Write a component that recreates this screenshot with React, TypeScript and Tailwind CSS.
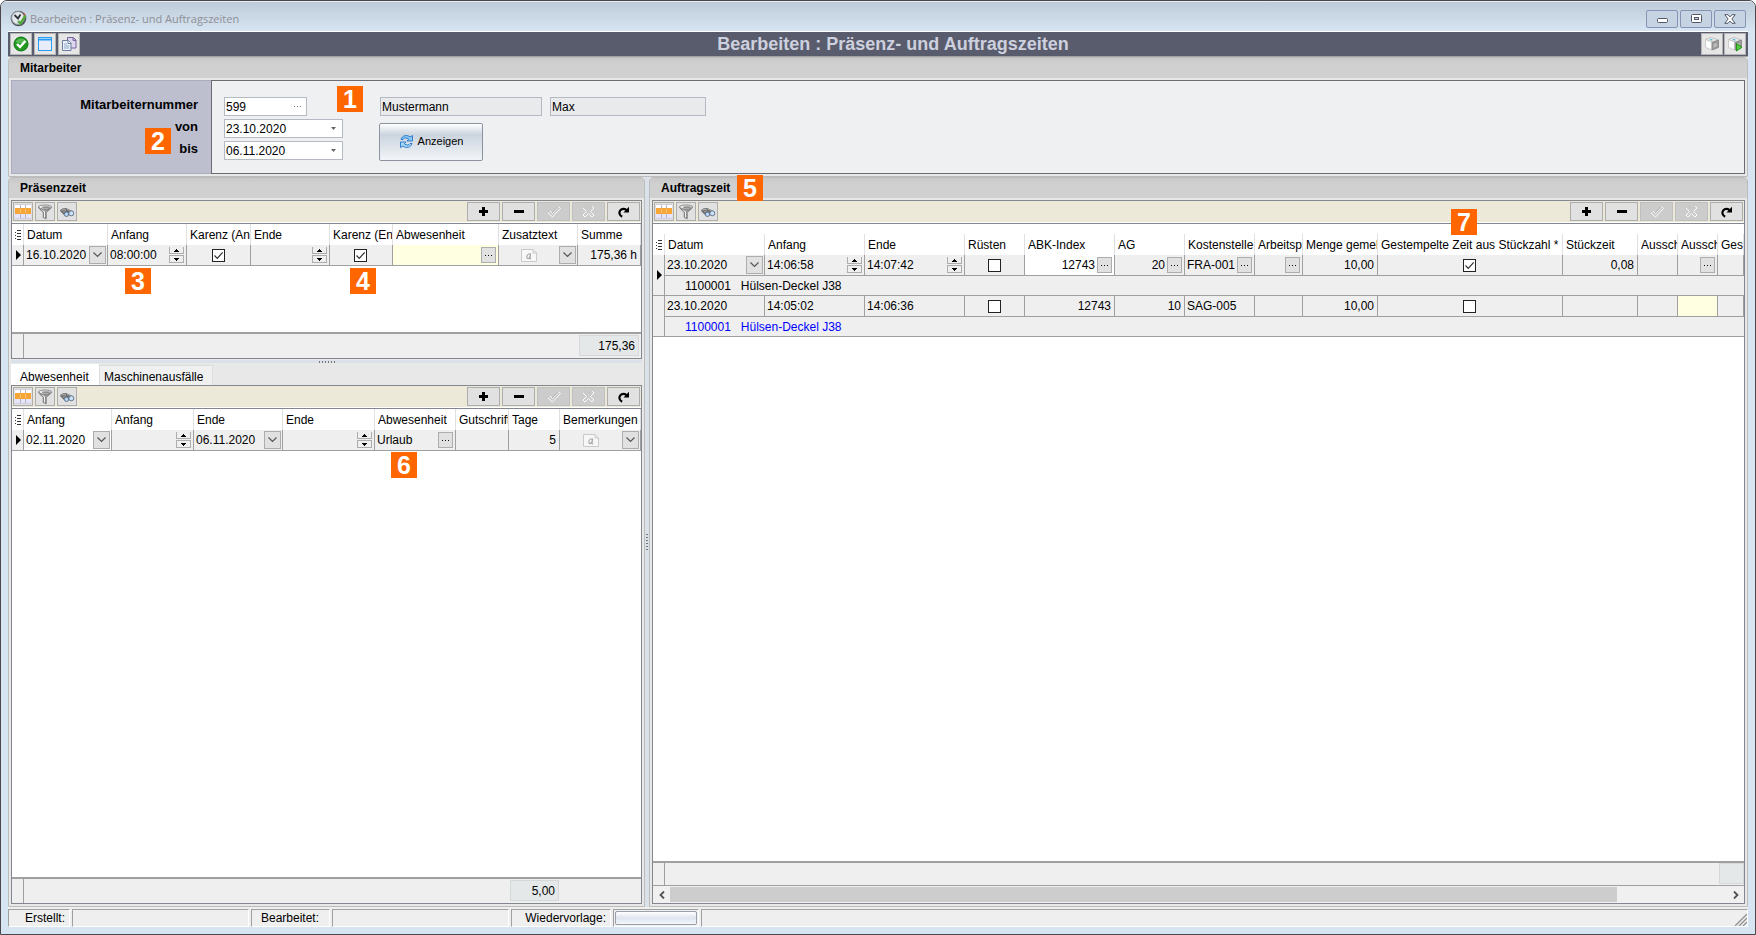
import React, { useId } from "react";

/* ---------- icons ---------- */

const ClockIcon = () => (
  <svg width="17" height="17" viewBox="0 0 17 17" className="shrink-0">
    <circle cx="8.5" cy="8.5" r="7.8" fill="#4f545c" />
    <circle cx="8" cy="8" r="6.4" fill="#e4e9ed" stroke="#8e959c" />
    <path d="M4.5 5l3.5 3.500L10.500 4.500" fill="none" stroke="#2f343b" strokeWidth="1.8" />
    <path d="M8 11l2.500 2.500 5-8" fill="none" stroke="#55a83c" strokeWidth="2.4" />
    <path d="M13.500 3.500l1.500 1.500" stroke="#c8443c" strokeWidth="1.2" />
  </svg>
);

const OkIcon = () => (
  <svg width="16" height="16" viewBox="0 0 16 16">
    <circle cx="8" cy="8" r="7" fill="#1f9a1f" stroke="#0f7415" />
    <path d="M2.5 6a6 6 0 0 1 11 0c-2 1.6-8 2-11 0z" fill="#6cc86a" opacity=".7" />
    <path d="M4 8l3 3 5.4-6" fill="none" stroke="#fff" strokeWidth="2.4" />
  </svg>
);

const WindowIcon = () => (
  <svg width="16" height="16" viewBox="0 0 16 16">
    <rect x="1.5" y="1.5" width="13" height="13" fill="#e9ecfb" stroke="#2a9bf2" />
    <rect x="1" y="1" width="14" height="3.5" fill="#2a9bf2" />
    <rect x="2" y="2" width="12" height="1" fill="#9bd6ff" />
  </svg>
);

const CopyIcon = () => (
  <svg width="16" height="16" viewBox="0 0 16 16">
    <path d="M6.500 1.500h6l2.500 2.500v8h-8.500z" fill="#dcd6ee" stroke="#77629c" />
    <path d="M12 1.500v3h3" fill="#b9a9dc" stroke="#77629c" />
    <path d="M1.500 4.500h6l2.500 2.500v7.500h-8.500z" fill="#eef3fb" stroke="#6b7d9c" />
    <path d="M7 4.500v3h3" fill="#fff" stroke="#6b7d9c" />
    <path d="M3 8h3M3 10h5.500M3 12h5.500" stroke="#8ea4c8" />
  </svg>
);

const CubeIcon = ({ play = false }: { play?: boolean }) => (
  <svg width="16" height="16" viewBox="0 0 16 16">
    <path d="M1.500 3.500l5.500-2 7.500 2.500-6 2z" fill="#ececec" stroke="#b9b9b9" strokeWidth=".8" />
    <path d="M1.500 3.500l6.500 2.500v8l-6.500-2.500z" fill="#fdfdfd" stroke="#c2c2c2" strokeWidth=".8" />
    <path d="M8 6.500l6.500-2.500v7.500l-6.500 2.500z" fill="#999" stroke="#858585" strokeWidth=".8" />
    <path d="M9.500 8l3.500-1.300v3.600l-3.500 1.400z" fill="#b9b9b9" />
    <path d="M6 3.200l2.500 1" stroke="#3db4dd" strokeWidth="1.2" />
    {play && <path d="M9.500 7.500l5.500 3.800-5.500 3.700z" fill="#4fd13a" stroke="#2a8f1e" />}
  </svg>
);

const GridIcon = () => (
  <svg width="16" height="15" viewBox="0 0 16 15" shapeRendering="crispEdges" className="shrink-0">
    <rect width="16" height="15" fill="#ffffff" />
    <rect y="10" width="16" height="5" fill="#e4e4fa" />
    <path d="M5 0h1v15h-1zM10 0h1v15h-1z" fill="#b9b4c4" />
    <rect y="4" width="16" height="6" fill="#f7a534" />
    <path d="M5 5h1v4h-1zM10 5h1v4h-1z" fill="#fac67e" />
    <path d="M0 0h16v1h-16zM0 14h16v1h-16z" fill="#d0d0dc" />
  </svg>
);

const FunnelIcon = () => (
  <svg width="16" height="16" viewBox="0 0 16 16" className="shrink-0">
    <path d="M1.500 3c0 2 4.700 4.500 4.700 5.500v5l3 1.200v-6.200c0-1 5.300-3.500 5.300-5.500z" fill="#979797" stroke="#6d6d6d" strokeWidth=".8" />
    <path d="M3.500 5c1.500 1.500 3.500 2.500 3.500 3.500v4.800l1 .4V7.500c-1-.7-3-1.500-4.500-2.500z" fill="#f0f0f0" />
    <ellipse cx="8" cy="3" rx="6.500" ry="2" fill="#ececec" stroke="#777" strokeWidth=".8" />
    <ellipse cx="9" cy="3.300" rx="4" ry="1" fill="#8f8f8f" />
  </svg>
);

const BinocularsIcon = () => (
  <svg width="16" height="16" viewBox="0 0 16 16" className="shrink-0">
    <path d="M1 7c0-2 3.500-3.500 6-3l5.500 2.500 1.500 2-6 3.500-3.500-1.500z" fill="#6f6f6f" />
    <path d="M2.500 6.300c1.500-1 2.500-1.200 4-1" stroke="#c9c9c9" fill="none" />
    <path d="M8 5.300l4 1.700M4 8l3-1.500" stroke="#a5a5a5" />
    <circle cx="7.500" cy="10.300" r="2.200" fill="#b5d6f8" stroke="#5c6b80" strokeWidth=".9" />
    <circle cx="12.300" cy="9.300" r="2.500" fill="#c9e2fa" stroke="#5c6b80" strokeWidth=".9" />
  </svg>
);

const PlusIcon = () => (
  <svg width="9" height="9" viewBox="0 0 9 9" shapeRendering="crispEdges">
    <path d="M3 0h3v3h3v3h-3v3h-3v-3h-3v-3h3z" fill="#000" />
  </svg>
);

const MinusIcon = () => (
  <svg width="10" height="9" viewBox="0 0 10 9" shapeRendering="crispEdges">
    <path d="M0 3h10v3h-10z" fill="#000" />
  </svg>
);

const PostIcon = () => (
  <svg width="14" height="12" viewBox="0 0 14 12">
    <path d="M1 7l2-2 2.500 2.500 6-7 2 2L5.500 11z" fill="#cbcbcb" stroke="#fff" strokeWidth=".9" />
    <path d="M1 6.500l1.500-1.500M5 7l6-6.500" stroke="#a3a3a3" strokeWidth=".8" />
  </svg>
);

const CancelIcon = () => (
  <svg width="13" height="13" viewBox="0 0 13 13">
    <path d="M1 3l2-2 3.500 3.500L10 1l2 2-3.500 3.500L12 10l-2 2-3.500-3.500L3 12l-2-2 3.500-3.500z" fill="#cbcbcb" stroke="#fff" strokeWidth=".9" />
    <path d="M1 2.800l2-2 3.500 3.500L10 .8" fill="none" stroke="#a3a3a3" strokeWidth=".7" />
  </svg>
);

const ReloadIcon = () => (
  <svg width="12" height="12" viewBox="0 0 12 12">
    <path d="M4.200 10.600A4 4 0 1 1 8.800 4.600" fill="none" stroke="#000" strokeWidth="2.200" />
    <path d="M11 .8v5.700H5.500z" fill="#000" />
  </svg>
);

const RefreshIcon = () => (
  <svg width="15" height="15" viewBox="0 0 15 15">
    <path d="M2 5.500C3 1.500 8 .3 11 3l2.500-1.500v5.500H8l1.700-1.800C7.500 3.300 4.800 3.800 4 5.500z" fill="#8cc8f4" stroke="#2272c8" strokeWidth=".9" />
    <path d="M13 9.500c-1 4-6 5.200-9 2.500l-2.500 1.500V8H7L5.300 9.800c2.200 1.900 4.900 1.400 5.700-.3z" fill="#a8d8f8" stroke="#2272c8" strokeWidth=".9" />
  </svg>
);

const IndicatorIcon = () => (
  <svg width="6" height="10" viewBox="0 0 6 10" shapeRendering="crispEdges" className="ml-[3px]">
    <path d="M2 .5h4M2 3.500h4M2 6.500h4M2 9.500h4M0 2h1M0 5h1M0 8h1" stroke="#333" />
  </svg>
);

const RowArrow = () => (
  <svg width="5" height="10" viewBox="0 0 5 10" className="ml-1">
    <path d="M0 0l5 5-5 5z" fill="#000" />
  </svg>
);

const NoteIcon = () => (
  <svg width="16" height="13" viewBox="0 0 16 13">
    <path d="M.5.500h11.500l3.500 3.500v8.500h-15z" fill="#f7f7f7" stroke="#c9c9c9" />
    <path d="M12 .5v3.500h3.500" fill="none" stroke="#c9c9c9" />
    <path d="M9.700 4.500L9 9.200c0 .8.600.8 1 .3M9.400 6.200c-.3-2-2.600-1.500-3.300.4-.8 2.400.4 3.600 1.500 2.900.8-.5 1.500-1.800 1.800-3.300z" fill="none" stroke="#a5a5a5" strokeWidth="1.100" />
  </svg>
);

/* ---------- small controls ---------- */

const Badge = ({ n, className }: { n: number; className: string }) => (
  <span
    className={`absolute z-10 flex size-[26px] items-center justify-center bg-[#ff6600] text-[25px] leading-none font-bold text-white ${className}`}
  >
    {n}
  </span>
);

const ComboButton = ({ label }: { label: string }) => (
  <button type="button" aria-label={label} className="flex h-[18px] w-[17px] shrink-0 items-center justify-center border border-[#adadad] bg-[#e1e1e1]">
    <svg width="9" height="6" viewBox="0 0 9 6">
      <path d="M.5.500l4 4 4-4" fill="none" stroke="#555" strokeWidth="1.200" />
    </svg>
  </button>
);

const DotsButton = ({ label }: { label: string }) => (
  <button type="button" aria-label={label} className="flex h-4 w-[15px] shrink-0 items-center justify-center border border-[#adadad] bg-[#e1e1e1]">
    <svg width="7" height="1" viewBox="0 0 7 1" shapeRendering="crispEdges">
      <path d="M0 0h1v1h-1zM3 0h1v1h-1zM6 0h1v1h-1z" fill="#111" />
    </svg>
  </button>
);

const Spinner = ({ label }: { label: string }) => (
  <span className="flex shrink-0 flex-col gap-px">
    <button type="button" aria-label={`${label} erhöhen`} className="flex h-[7px] w-[15px] items-center justify-center border border-t-0 border-[#adadad] bg-[#efefef]">
      <svg width="5" height="3" viewBox="0 0 5 3" shapeRendering="crispEdges">
        <path d="M2 0h1v1h1v1h1v1h-5v-1h1v-1h1z" fill="#000" />
      </svg>
    </button>
    <button type="button" aria-label={`${label} verringern`} className="flex h-2 w-[15px] items-center justify-center border border-[#adadad] bg-[#efefef]">
      <svg width="5" height="3" viewBox="0 0 5 3" shapeRendering="crispEdges">
        <path d="M0 0h5v1h-1v1h-1v1h-1v-1h-1v-1h-1z" fill="#000" />
      </svg>
    </button>
  </span>
);

const Check = ({ label, on = false }: { label: string; on?: boolean }) => (
  <div className="flex justify-center pr-px">
    <span className="relative block size-[13px]">
      <input type="checkbox" aria-label={label} defaultChecked={on} className="peer block size-[13px] appearance-none border border-[#222] bg-white" />
      <svg width="13" height="13" viewBox="0 0 13 13" className="pointer-events-none invisible absolute inset-0 peer-checked:visible">
        <path d="M2.500 6.500l2.800 2.800 5.400-6" fill="none" stroke="#333" strokeWidth="1.200" />
      </svg>
    </span>
  </div>
);

const TextCell = ({ label, value, right = false }: { label: string; value: string; right?: boolean }) => (
  <input
    type="text"
    aria-label={label}
    defaultValue={value}
    className={`h-[18px] w-full min-w-0 flex-1 bg-transparent outline-none ${right ? "text-right" : "text-left"}`}
  />
);

/* ---------- tables ---------- */

type CellSpec = {
  value?: string;
  right?: boolean;
  kind?: "combo" | "dots" | "spin" | "check" | "note";
  on?: boolean;
  bg?: string;
};

const Cell = ({ cell, label }: { cell: CellSpec; label: string }) => {
  const k = cell.kind;
  const pad = k === "combo" ? "pl-0.5 pr-px" : k === "spin" || k === "dots" ? "pl-0.5 pr-0.5" : "pl-0.5 pr-[3px]";
  return (
    <td className={`h-[21px] border-r border-b border-[#a0a0a0] p-0 ${cell.bg ?? "bg-[#efefef]"}`}>
      {k === "check" ? (
        <Check label={label} on={cell.on} />
      ) : k === "note" ? (
        <div className="flex items-center pr-px">
          <span className="flex flex-1 justify-center">
            <NoteIcon />
          </span>
          <ComboButton label={label} />
        </div>
      ) : (
        <div className={`flex items-center gap-0.5 ${pad}`}>
          <TextCell label={label} value={cell.value ?? ""} right={cell.right} />
          {k === "combo" && <ComboButton label={`${label} auswählen`} />}
          {k === "dots" && <DotsButton label={`${label} suchen`} />}
          {k === "spin" && <Spinner label={label} />}
        </div>
      )}
    </td>
  );
};

const Head = ({ columns }: { columns: string[] }) => (
  <thead>
    <tr>
      <th className="h-[21px] border-r border-[#e0e0e0] p-0">
        <IndicatorIcon />
      </th>
      {columns.map((c, i) => (
        <th key={i} className="h-[21px] border-r border-[#e0e0e0] p-0 pl-[3px] text-left font-normal">
          <div className="overflow-hidden whitespace-nowrap">{c}</div>
        </th>
      ))}
    </tr>
  </thead>
);

const Cols = ({ widths }: { widths: string[] }) => (
  <colgroup>
    <col className="w-3" />
    {widths.map((w, i) => (
      <col key={i} className={w} />
    ))}
  </colgroup>
);

const Marker = ({ rows = 1, active = false }: { rows?: number; active?: boolean }) => (
  <td rowSpan={rows} className="border-r border-b border-[#a0a0a0] bg-[#efefef] p-0">
    {active && <RowArrow />}
  </td>
);

const toolButton = "flex h-[19px] w-5 items-center justify-center border border-[#adadad] bg-[#e1e1e1]";
const navButton = "flex h-[19px] w-[33px] items-center justify-center border";
const navActive = "border-[#adadad] bg-[#e1e1e1]";
const navIdle = "border-[#bfbfbf] bg-[#cccccc]";

const GridToolbar = () => (
  <div className="flex h-[22px] shrink-0 items-center justify-between border-b border-white bg-[#ece9d8] px-px">
    <div className="flex gap-0.5">
      <button type="button" aria-label="Spalten" className={toolButton}><GridIcon /></button>
      <button type="button" aria-label="Filter" className={toolButton}><FunnelIcon /></button>
      <button type="button" aria-label="Suchen" className={toolButton}><BinocularsIcon /></button>
    </div>
    <div className="flex gap-0.5">
      <button type="button" aria-label="Einfügen" className={`${navButton} ${navActive}`}><PlusIcon /></button>
      <button type="button" aria-label="Löschen" className={`${navButton} ${navActive}`}><MinusIcon /></button>
      <button type="button" aria-label="Speichern" disabled className={`${navButton} ${navIdle}`}><PostIcon /></button>
      <button type="button" aria-label="Abbrechen" disabled className={`${navButton} ${navIdle}`}><CancelIcon /></button>
      <button type="button" aria-label="Aktualisieren" className={`${navButton} ${navActive}`}><ReloadIcon /></button>
    </div>
  </div>
);

const SectionHead = ({ children }: { children: React.ReactNode }) => (
  <h2 className="h-5 shrink-0 bg-linear-to-b from-[#c8c8c8] to-[#d0d0d0] to-30% pl-[11px] text-xs leading-5 font-bold">{children}</h2>
);

const presence = {
  columns: ["Datum", "Anfang", "Karenz (Anfang)", "Ende", "Karenz (Ende)", "Abwesenheit", "Zusatztext", "Summe"],
  widths: ["w-[84px]", "w-[79px]", "w-[64px]", "w-[79px]", "w-[63px]", "w-[106px]", "w-[79px]", "w-auto"],
  cells: [
    { value: "16.10.2020", kind: "combo" },
    { value: "08:00:00", kind: "spin" },
    { kind: "check", on: true },
    { kind: "spin" },
    { kind: "check", on: true },
    { kind: "dots", bg: "bg-[#ffffe1]" },
    { kind: "note" },
    { value: "175,36 h", right: true },
  ] as CellSpec[],
};

const absence = {
  columns: ["Anfang", "Anfang", "Ende", "Ende", "Abwesenheit", "Gutschrift", "Tage", "Bemerkungen"],
  widths: ["w-[88px]", "w-[82px]", "w-[89px]", "w-[92px]", "w-[81px]", "w-[53px]", "w-[51px]", "w-auto"],
  cells: [
    { value: "02.11.2020", kind: "combo", bg: "bg-white" },
    { kind: "spin" },
    { value: "06.11.2020", kind: "combo" },
    { kind: "spin" },
    { value: "Urlaub", kind: "dots" },
    {},
    { value: "5", right: true },
    { kind: "note" },
  ] as CellSpec[],
};

const orders = {
  columns: ["Datum", "Anfang", "Ende", "Rüsten", "ABK-Index", "AG", "Kostenstelle", "Arbeitsplatz", "Menge gemeldet", "Gestempelte Zeit aus Stückzahl *", "Stückzeit", "Ausschuss", "Ausschuss", "Gesamt"],
  widths: ["w-[100px]", "w-[100px]", "w-[100px]", "w-[60px]", "w-[90px]", "w-[70px]", "w-[70px]", "w-[48px]", "w-[75px]", "w-[185px]", "w-[75px]", "w-[40px]", "w-[40px]", "w-auto"],
  rows: [
    {
      active: true,
      tone: "text-black",
      cells: [
        { value: "23.10.2020", kind: "combo" },
        { value: "14:06:58", kind: "spin" },
        { value: "14:07:42", kind: "spin" },
        { kind: "check" },
        { value: "12743", right: true, kind: "dots", bg: "bg-white" },
        { value: "20", right: true, kind: "dots" },
        { value: "FRA-001", kind: "dots" },
        { kind: "dots" },
        { value: "10,00", right: true },
        { kind: "check", on: true },
        { value: "0,08", right: true },
        {},
        { kind: "dots" },
        {},
      ] as CellSpec[],
    },
    {
      active: false,
      tone: "text-[#0000ff]",
      cells: [
        { value: "23.10.2020" },
        { value: "14:05:02" },
        { value: "14:06:36" },
        { kind: "check" },
        { value: "12743", right: true },
        { value: "10", right: true },
        { value: "SAG-005" },
        {},
        { value: "10,00", right: true },
        { kind: "check" },
        {},
        {},
        { bg: "bg-[#ffffe1]" },
        {},
      ] as CellSpec[],
    },
  ],
};

const tableClass = "w-full table-fixed border-separate border-spacing-0";
const gridFrame = "flex flex-col border border-[#828790] bg-white";

const SimpleTable = ({ data }: { data: typeof presence }) => (
  <table className={tableClass}>
    <Cols widths={data.widths} />
    <Head columns={data.columns} />
    <tbody>
      <tr>
        <Marker active />
        {data.cells.map((c, i) => (
          <Cell key={i} cell={c} label={data.columns[i]} />
        ))}
      </tr>
    </tbody>
  </table>
);

const sumBox = "flex h-[21px] items-center justify-end border border-[#d5d8d8] bg-[#e4e8e9] pr-[3px]";

/* ---------- form ---------- */

const DateField = ({ id, value }: { id: string; value: string }) => (
  <div className="flex h-[19px] w-[119px] items-center border border-[#b4b9c4] bg-white pr-1.5 pl-px">
    <input id={id} type="text" defaultValue={value} className="w-full min-w-0 flex-1 outline-none" />
    <button type="button" aria-label="Kalender öffnen">
      <svg width="5" height="3" viewBox="0 0 5 3" className="block"><path d="M0 0h5l-2.500 3z" fill="#666" /></svg>
    </button>
  </div>
);

const winButton = "flex h-[18px] w-8 items-center justify-center rounded-xs border border-[#8593b5] bg-[#c5d3e3]";
const barButton = "flex size-[22px] items-center justify-center border border-[#b5b5b5] bg-[#e6e6e6]";
const statusCell = "h-[18px] border border-t-[#a0a0a0] border-l-[#a0a0a0] border-r-white border-b-white";

export default function App() {
  const uid = useId();
  const nr = `${uid}-nr`;
  const from = `${uid}-von`;
  const to = `${uid}-bis`;
  return (
    <div className="bg-white">
      <div className="relative flex h-screen flex-col overflow-hidden rounded-t-[7px] border border-[#4b474c] bg-[#d7e4f2] font-['Liberation_Sans',sans-serif] text-xs text-black">
        {/* window title */}
        <header className="flex h-[30px] shrink-0 items-center border-t border-[#e6edf4] bg-linear-to-b from-[#becbd9] to-[#d7e4f2] px-[9px] pt-1">
          <ClockIcon />
          <span className="flex-1 pt-0.5 pl-[3px] font-['Open_Sans',sans-serif] text-[11px] text-[#8e8f94]">Bearbeiten : Präsenz- und Auftragszeiten</span>
          <div className="flex gap-0.5">
            <button type="button" aria-label="Minimieren" className={winButton}>
              <svg width="11" height="5" viewBox="0 0 11 5" className="mt-1"><rect x=".5" y=".5" width="10" height="4" rx="1" fill="#fff" stroke="#535666" /></svg>
            </button>
            <button type="button" aria-label="Maximieren" className={winButton}>
              <svg width="11" height="9" viewBox="0 0 11 9"><rect x=".5" y=".5" width="10" height="8" rx="1" fill="#fff" stroke="#535666" /><rect x="3.500" y="3.500" width="4" height="2" fill="#c5d3e3" stroke="#535666" /></svg>
            </button>
            <button type="button" aria-label="Schließen" className={winButton}>
              <svg width="12" height="10" viewBox="0 0 12 10"><path d="M.8.700h3.200l2 2.200 2-2.200h3.200l-3.400 4.300 3.400 4.300h-3.200l-2-2.200-2 2.200h-3.200l3.400-4.300z" fill="#fff" stroke="#535666" /></svg>
            </button>
          </div>
        </header>

        <div className="mx-[7px] mb-[7px] flex min-h-0 flex-1 flex-col bg-[#e8e8e8]">
          {/* main toolbar */}
          <div className="flex h-[26px] shrink-0 items-center border-t border-b border-t-white border-b-[#a2a2a2] bg-[#595c6c] px-0.5">
            <div className="flex w-[110px] gap-0.5">
              <button type="button" aria-label="OK" className={barButton}><OkIcon /></button>
              <button type="button" aria-label="Fenster" className={barButton}><WindowIcon /></button>
              <button type="button" aria-label="Kopieren" className={barButton}><CopyIcon /></button>
            </div>
            <h1 className="flex-1 text-center text-lg leading-6 font-bold text-[#cdd0de]">Bearbeiten : Präsenz- und Auftragszeiten</h1>
            <div className="flex w-20 justify-end gap-px">
              <button type="button" aria-label="Modul" className={barButton}><CubeIcon /></button>
              <button type="button" aria-label="Modul starten" className={barButton}><CubeIcon play /></button>
            </div>
          </div>

          {/* employee */}
          <section className="flex shrink-0 flex-col rounded-t-sm border border-[#bcbcbc]">
            <SectionHead>Mitarbeiter</SectionHead>
            <div className="m-0.5 flex h-[94px]">
              <div className="flex w-[200px] flex-col gap-[3px] border border-r-0 border-[#a9abc0] bg-[#bdbfcf] pt-3.5 pr-[13px] text-right text-[13px] leading-[19px] font-bold">
                <label htmlFor={nr}>Mitarbeiternummer</label>
                <label htmlFor={from}>von</label>
                <label htmlFor={to}>bis</label>
              </div>
              <div className="flex flex-1 border border-[#6b6c74] bg-[#eff0f2] pt-4 pl-3">
                <div className="flex w-[155px] flex-col gap-[3px]">
                  <div className="flex h-[19px] w-[83px] items-center border border-[#b4b9c4] bg-white pr-1 pl-px">
                    <input id={nr} type="text" defaultValue="599" className="w-full min-w-0 flex-1 outline-none" />
                    <button type="button" aria-label="Mitarbeiter suchen">
                      <svg width="8" height="1" viewBox="0 0 8 1" className="block"><path d="M0 0h1v1h-1zM3 0h1v1h-1zM6 0h1v1h-1z" fill="#777" /></svg>
                    </button>
                  </div>
                  <DateField id={from} value="23.10.2020" />
                  <DateField id={to} value="06.11.2020" />
                </div>
                <div className="flex flex-col gap-[7px]">
                  <div className="flex gap-2 pl-px">
                    <input type="text" readOnly aria-label="Nachname" value="Mustermann" className="h-[19px] w-[162px] border border-[#b4b9c4] bg-[#e9eaec] pl-px" />
                    <input type="text" readOnly aria-label="Vorname" value="Max" className="h-[19px] w-[156px] border border-[#b4b9c4] bg-[#e9eaec] pl-px" />
                  </div>
                  <button type="button" className="flex h-[38px] w-[104px] items-center justify-center gap-1 rounded-xs border border-[#8d949f] bg-linear-to-b from-white via-[#cbd4de] via-30% to-[#f2f5f8] pb-0.5 text-[11px]">
                    <RefreshIcon />
                    Anzeigen
                  </button>
                </div>
              </div>
            </div>
          </section>

          {/* working area */}
          <div className="flex min-h-0 flex-1">
            <div className="flex w-[637px] shrink-0 flex-col rounded-t-sm border border-[#bcbcbc]">
              <SectionHead>Präsenzzeit</SectionHead>
              <div className="m-0.5 flex min-h-0 flex-1 flex-col">
                <section className={`${gridFrame} h-[159px] shrink-0`}>
                  <GridToolbar />
                  <div className="min-h-0 flex-1 overflow-hidden border-t border-[#828790]">
                    <SimpleTable data={presence} />
                  </div>
                  <div className="flex h-[26px] shrink-0 border-t-2 border-[#a0a0a0] bg-[#efefef]">
                    <span className="w-3 border-r border-[#a0a0a0]" />
                    <span className="flex flex-1 items-start justify-end pt-px pr-0.5">
                      <output className={`${sumBox} w-[60px]`}>175,36</output>
                    </span>
                  </div>
                </section>

                <div className="flex h-[5px] shrink-0 justify-center py-px">
                  <div className="flex w-full items-center justify-center gap-0.5 bg-[#dbe1e8]">
                    {[0, 1, 2, 3, 4, 5].map((i) => (
                      <span key={i} className="h-0.5 w-px bg-[#777]" />
                    ))}
                  </div>
                </div>

                <div role="tablist" className="flex h-[21px] shrink-0 items-end">
                  <button type="button" role="tab" aria-selected="true" className="h-[21px] w-[88px] bg-white pt-1 pl-[9px] text-left">Abwesenheit</button>
                  <button type="button" role="tab" aria-selected="false" className="h-5 w-[114px] border border-b-0 border-[#dcdcdc] bg-[#f0f0f0] pt-0.5 pl-1 text-left">Maschinenausfälle</button>
                </div>

                <section className={`${gridFrame} min-h-0 flex-1`}>
                  <GridToolbar />
                  <div className="min-h-0 flex-1 overflow-hidden border-t border-[#828790]">
                    <SimpleTable data={absence} />
                  </div>
                  <div className="flex h-[26px] shrink-0 border-t-2 border-[#a0a0a0] bg-[#efefef]">
                    <span className="w-3 border-r border-[#a0a0a0]" />
                    <span className="flex flex-1 items-start justify-end pt-px pr-[82px]">
                      <output className={`${sumBox} w-[49px]`}>5,00</output>
                    </span>
                  </div>
                </section>
              </div>
            </div>

            <div className="flex w-1 shrink-0 flex-col items-center justify-center gap-0.5 bg-[#dbe1e8]">
              {[0, 1, 2, 3, 4, 5].map((i) => (
                <span key={i} className="h-px w-0.5 bg-[#777]" />
              ))}
            </div>

            <section className="flex min-w-0 flex-1 flex-col rounded-t-sm border border-[#bcbcbc]">
              <SectionHead>Auftragszeit</SectionHead>
              <div className={`${gridFrame} m-0.5 min-h-0 flex-1`}>
                <GridToolbar />
                <div className="min-h-0 flex-1 overflow-hidden border-t border-[#828790] pt-2.5">
                  <table className={tableClass}>
                    <Cols widths={orders.widths} />
                    <Head columns={orders.columns} />
                    <tbody>
                      {orders.rows.map((r, ri) => (
                        <React.Fragment key={ri}>
                          <tr>
                            <Marker rows={2} active={r.active} />
                            {r.cells.map((c, i) => (
                              <Cell key={i} cell={c} label={orders.columns[i]} />
                            ))}
                          </tr>
                          <tr>
                            <td colSpan={14} className={`h-5 border-b border-[#a0a0a0] bg-[#efefef] p-0 pl-5 ${r.tone}`}>
                              <div className="flex gap-2.5">
                                <span>1100001</span>
                                <span>Hülsen-Deckel J38</span>
                              </div>
                            </td>
                          </tr>
                        </React.Fragment>
                      ))}
                    </tbody>
                  </table>
                </div>
                <div className="flex h-[25px] shrink-0 border-t-2 border-b border-[#a0a0a0] bg-[#efefef]">
                  <span className="w-3 border-r border-[#a0a0a0]" />
                  <span className="flex flex-1 justify-end">
                    <output className={`${sumBox} w-[25px]`} />
                  </span>
                </div>
                <div className="flex h-[17px] shrink-0 items-center bg-[#f0f0f0]">
                  <button type="button" aria-label="Nach links" className="flex w-[17px] justify-center">
                    <svg width="6" height="8" viewBox="0 0 6 8"><path d="M5 .5l-3.500 3.500 3.500 3.500" fill="none" stroke="#505050" strokeWidth="1.800" /></svg>
                  </button>
                  <div className="flex flex-1">
                    <div className="h-[15px] w-[calc(100%-110px)] bg-[#cdcdcd]" />
                  </div>
                  <button type="button" aria-label="Nach rechts" className="flex w-[17px] justify-center">
                    <svg width="6" height="8" viewBox="0 0 6 8"><path d="M1 .5l3.500 3.500-3.500 3.500" fill="none" stroke="#505050" strokeWidth="1.800" /></svg>
                  </button>
                </div>
              </div>
            </section>
          </div>

          {/* status bar */}
          <footer className="flex shrink-0 gap-0.5 bg-[#efefef] pt-0.5">
            <div className={`${statusCell} w-[62px] pr-1 text-right`}>Erstellt:</div>
            <div className={`${statusCell} w-[177px]`} />
            <div className={`${statusCell} w-[79px] pr-2.5 text-right`}>Bearbeitet:</div>
            <div className={`${statusCell} w-[177px]`} />
            <div className={`${statusCell} w-[100px] pr-1 text-right`}>Wiedervorlage:</div>
            <div className={`${statusCell} w-[86px] px-px pt-px`}>
              <button type="button" aria-label="Wiedervorlage öffnen" className="block h-3.5 w-full rounded-xs border border-[#9aa0aa] bg-linear-to-b from-white via-[#dfe4ee] to-[#f4f6fa]" />
            </div>
            <div className={`${statusCell} flex flex-1 items-end justify-end`}>
              <svg width="12" height="12" viewBox="0 0 12 12"><path d="M0 12L12 0M4 12l8-8M8 12l4-4" stroke="#8f8f8f" strokeWidth="1.300" /></svg>
            </div>
          </footer>
        </div>

        {/* numbered callouts */}
        <Badge n={1} className="top-[85px] left-[336px]" />
        <Badge n={2} className="top-[127px] left-[144px]" />
        <Badge n={3} className="top-[267px] left-[124px]" />
        <Badge n={4} className="top-[267px] left-[349px]" />
        <Badge n={5} className="top-[174px] left-[736px]" />
        <Badge n={6} className="top-[451px] left-[390px]" />
        <Badge n={7} className="top-[208px] left-[1450px]" />
      </div>
    </div>
  );
}
